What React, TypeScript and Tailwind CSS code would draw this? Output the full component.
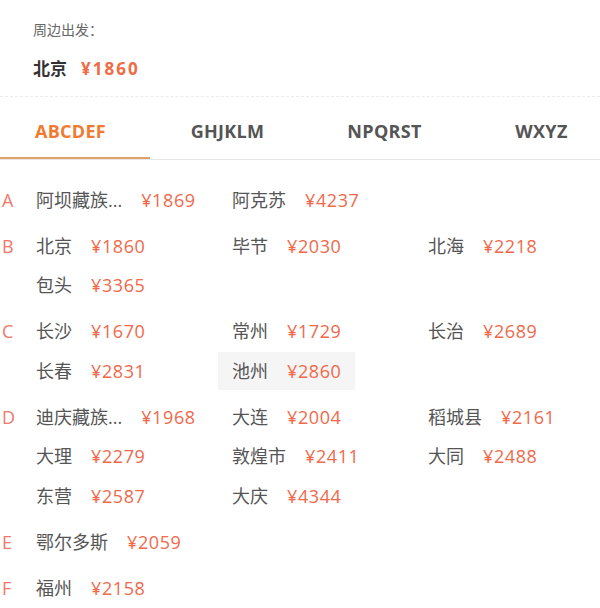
import { useState } from "react";

interface City {
  name: string;
  price: number;
}

interface Group {
  letter: string;
  cities: City[];
}

const groups: Group[] = [
  {
    letter: "A",
    cities: [
      { name: "阿坝藏族...", price: 1869 },
      { name: "阿克苏", price: 4237 },
    ],
  },
  {
    letter: "B",
    cities: [
      { name: "北京", price: 1860 },
      { name: "毕节", price: 2030 },
      { name: "北海", price: 2218 },
      { name: "包头", price: 3365 },
    ],
  },
  {
    letter: "C",
    cities: [
      { name: "长沙", price: 1670 },
      { name: "常州", price: 1729 },
      { name: "长治", price: 2689 },
      { name: "长春", price: 2831 },
      { name: "池州", price: 2860 },
    ],
  },
  {
    letter: "D",
    cities: [
      { name: "迪庆藏族...", price: 1968 },
      { name: "大连", price: 2004 },
      { name: "稻城县", price: 2161 },
      { name: "大理", price: 2279 },
      { name: "敦煌市", price: 2411 },
      { name: "大同", price: 2488 },
      { name: "东营", price: 2587 },
      { name: "大庆", price: 4344 },
    ],
  },
  { letter: "E", cities: [{ name: "鄂尔多斯", price: 2059 }] },
  { letter: "F", cities: [{ name: "福州", price: 2158 }] },
];

const tabs = ["ABCDEF", "GHJKLM", "NPQRST", "WXYZ"];

const font = { fontFamily: '"Open Sans", "Noto Sans CJK SC", sans-serif' };

export default function App() {
  const [active, setActive] = useState(0);
  const [hovered, setHovered] = useState("池州");

  return (
    <div className="w-[600px] h-[608px] overflow-hidden bg-white" style={font}>
      {/* Departure */}
      <div className="px-[33px] pt-[20px] h-[97px] border-b border-dashed border-[#ececec]">
        <p className="text-[14px] leading-[20px] text-[#666]">周边出发：</p>
        <p className="mt-[17px] text-[17px] leading-[24px] font-bold">
          <span className="text-[#333]">北京</span>
          <span className="ml-[14px] tracking-[2px] text-[#ef6b45]">¥1860</span>
        </p>
      </div>

      {/* Tabs */}
      <div className="relative h-[63px] border-b border-[#e8e8e8] overflow-hidden">
        <div className="flex h-full items-center pt-[6px] ml-[-8px]">
          {tabs.map((tab, i) => (
            <button
              key={tab}
              onClick={() => setActive(i)}
              className={`w-[157px] shrink-0 text-center text-[18px] font-bold tracking-[0.3px] ${
                i === active ? "text-[#f07a30]" : "text-[#555]"
              }`}
            >
              {tab}
            </button>
          ))}
        </div>
        <div className="absolute left-0 bottom-0 h-[2px] w-[150px] bg-[#e0a06a]" />
      </div>

      {/* City list */}
      <div className="pt-[21px]">
        {groups.map((g) => (
          <div key={g.letter} className="flex mb-[8px]">
            <div className="w-[22px] shrink-0 pl-[2px] h-[38px] flex items-center text-[18px] text-[#f0786a]">
              {g.letter}
            </div>
            <div className="grid grid-cols-[196px_196px_1fr] gap-y-[1.5px] flex-1">
              {g.cities.map((c) => (
                <div
                  key={c.name}
                  onMouseEnter={() => setHovered(c.name)}
                  className={`h-[38px] w-fit flex items-center gap-[19px] px-[14px] text-[18px] whitespace-nowrap ${
                    hovered === c.name ? "bg-[#f5f5f5]" : ""
                  }`}
                >
                  <span className="text-[#555]">{c.name}</span>
                  <span className="tracking-[0.6px] text-[#f0694b]">¥{c.price}</span>
                </div>
              ))}
            </div>
          </div>
        ))}
      </div>
    </div>
  );
}
